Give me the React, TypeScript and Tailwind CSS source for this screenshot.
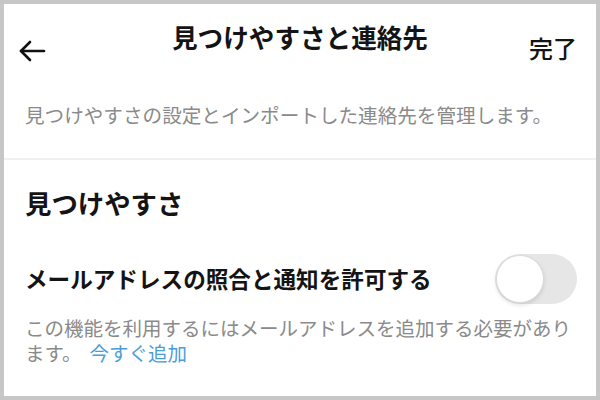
import React from 'react';

const jp = { fontFamily: '"Noto Sans CJK JP", "Noto Sans", sans-serif' };

const BackArrow = () => (
    <svg width="28" height="24" viewBox="0 0 28 24" fill="none" stroke="#111" strokeWidth="2.6" strokeLinecap="round" strokeLinejoin="round">
        <path d="M26 12H3" />
        <path d="M12 3L3 12l9 9" />
    </svg>
);

const Toggle = () => (
    <div className="w-[82px] h-[50px] rounded-full bg-[#e6e6e6] p-[1px] flex items-center">
        <div className="w-[48px] h-[48px] rounded-full bg-white border border-[#dcdcdc] shadow-[0_2px_4px_rgba(0,0,0,0.12)]" />
    </div>
);

export default function App() {
    return (
        <div style={jp} className="w-[600px] h-[400px] border-4 border-[#c6c6c6] bg-white overflow-hidden text-[#141414]">
            {/* header */}
            <div className="grid grid-cols-[1fr_auto_1fr] items-start h-[80px] px-[14px]">
                <div className="mt-[35px]">
                    <BackArrow />
                </div>
                <h1 className="mt-[20px] text-[25.6px] leading-[25px] font-bold">見つけやすさと連絡先</h1>
                <div className="mt-[32px] justify-self-end pr-[5px] text-[24px] leading-[24px] font-medium">完了</div>
            </div>

            <div className="px-[21px] pt-[21px] pb-[34px]">
                <p className="text-[19.6px] leading-[19px] text-[#8a8a8a] whitespace-nowrap">見つけやすさの設定とインポートした連絡先を管理します。</p>
            </div>

            <div className="h-[2px] bg-[#f0f0f0]" />

            <div className="pl-[21px] pr-[19px]">
                <h2 className="mt-[30px] text-[26.4px] leading-[26px] font-bold">見つけやすさ</h2>
                <div className="mt-[38px] flex items-center justify-between h-[50px]">
                    <span className="text-[22.6px] leading-[24px] font-bold">メールアドレスの照合と通知を許可する</span>
                    <Toggle />
                </div>
                <div className="mt-[11px] flex flex-col text-[19.5px] leading-[25px] text-[#8a8a8a] whitespace-nowrap">
                    <div>この機能を利用するにはメールアドレスを追加する必要があり</div>
                    <div className="flex">
                        <span>ます。</span>
                        <span className="ml-[8px] text-[#4a9ed8]">今すぐ追加</span>
                    </div>
                </div>
            </div>
        </div>
    );
}
